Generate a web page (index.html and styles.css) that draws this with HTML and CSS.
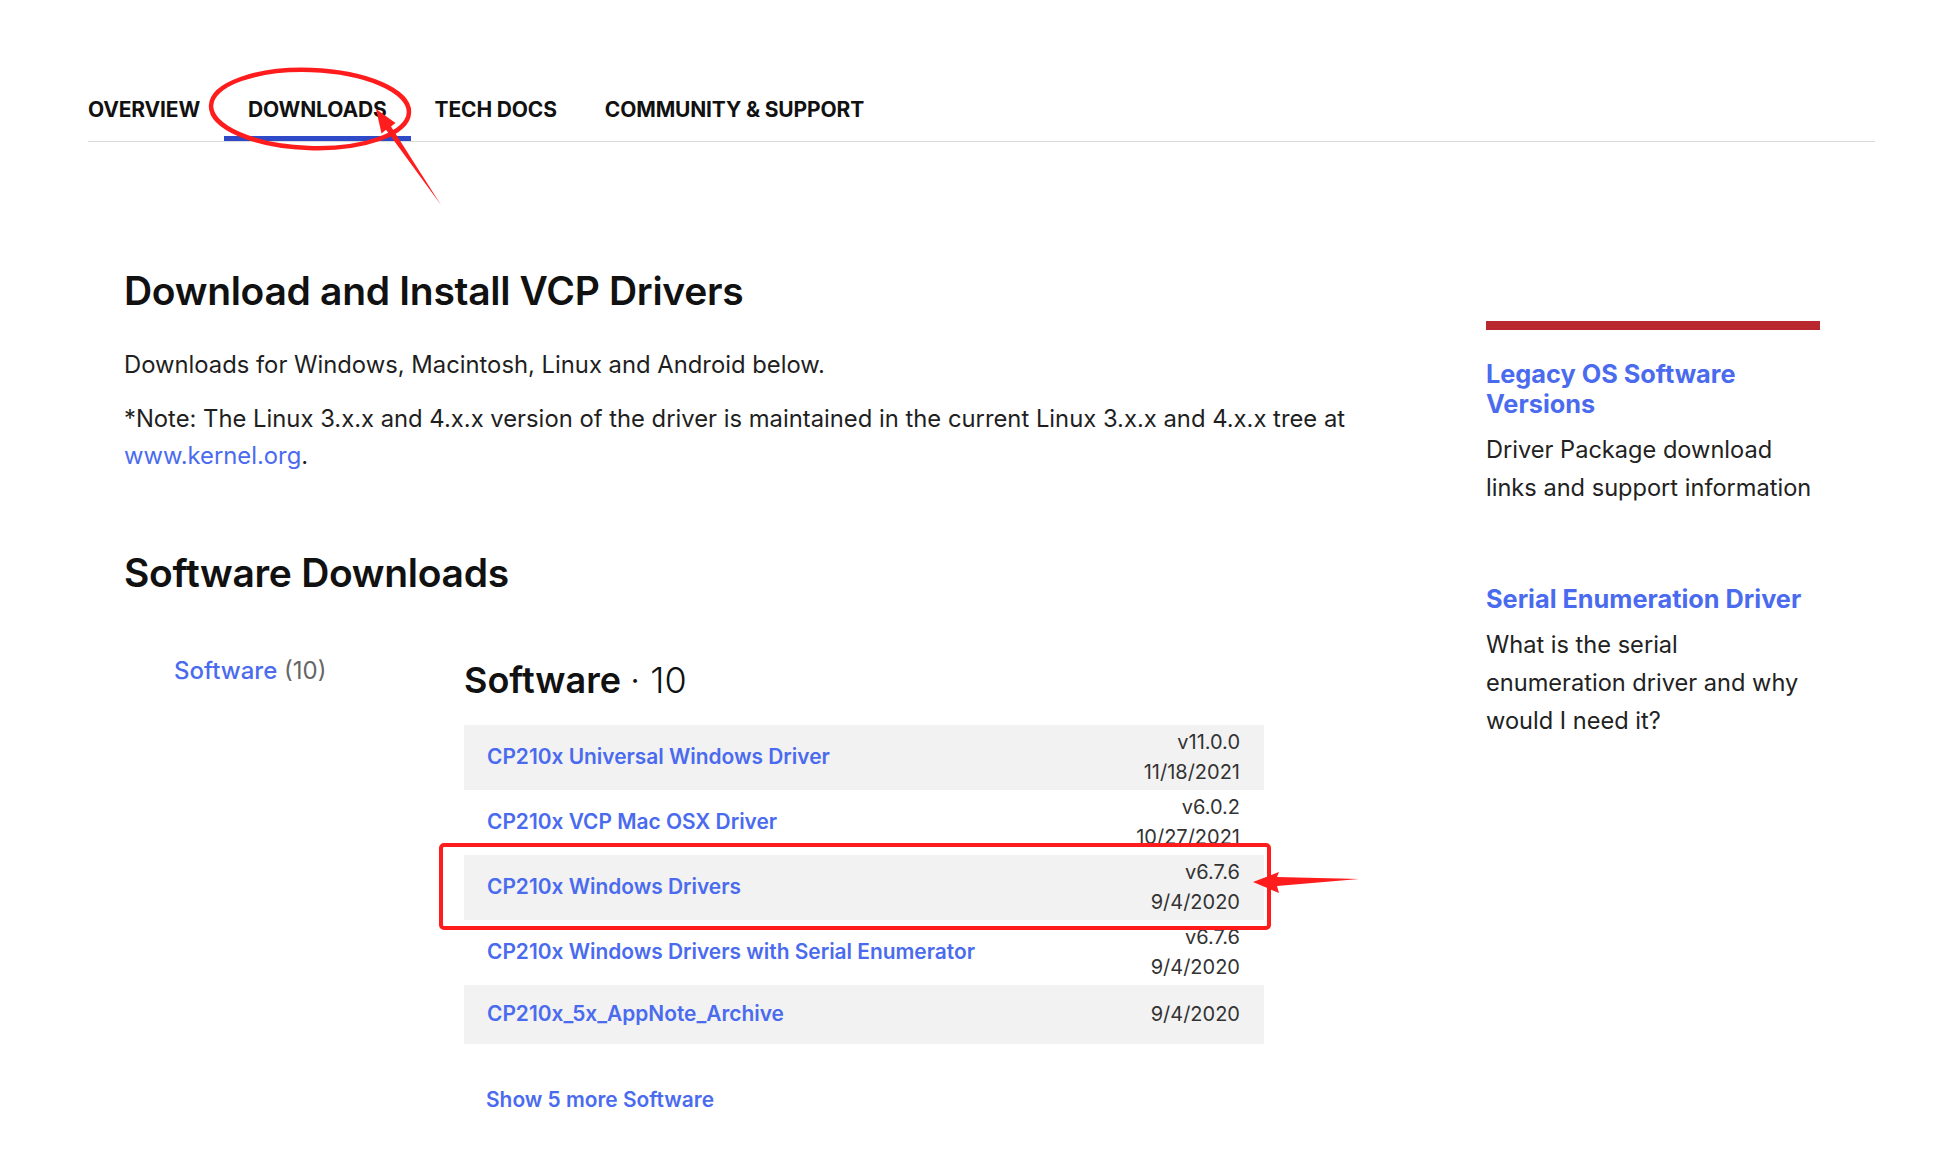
FILE: index.html
```html
<!DOCTYPE html>
<html lang="en">
<head>
<meta charset="utf-8">
<title>CP210x Downloads</title>
<link rel="stylesheet" href="styles.css">
</head>
<body>
<nav class="tabs">
  <a class="tab tab-first">OVERVIEW</a>
  <a class="tab tab-active">DOWNLOADS</a>
  <a class="tab">TECH DOCS</a>
  <a class="tab">COMMUNITY &amp; SUPPORT</a>
</nav>

<div class="layout">
  <main class="main">
    <h1 class="title">Download and Install VCP Drivers</h1>
    <p class="lead">Downloads for Windows, Macintosh, Linux and Android below.</p>
    <p class="note">*Note: The Linux 3.x.x and 4.x.x version of the driver is maintained in the current Linux 3.x.x and 4.x.x tree at <a class="link">www.kernel.org</a>.</p>

    <h2 class="title title-2">Software Downloads</h2>

    <div class="downloads">
      <div class="filters">
        <a class="filter-link">Software</a> <span class="filter-count">(10)</span>
      </div>
      <div class="results">
        <h3 class="results-title">Software <span class="results-count">· 10</span></h3>
        <div class="table">
          <div class="row row-shaded">
            <a class="row-name">CP210x Universal Windows Driver</a>
            <div class="row-meta"><span>v11.0.0</span><span>11/18/2021</span></div>
          </div>
          <div class="row">
            <a class="row-name">CP210x VCP Mac OSX Driver</a>
            <div class="row-meta"><span>v6.0.2</span><span>10/27/2021</span></div>
          </div>
          <div class="row row-shaded">
            <a class="row-name">CP210x Windows Drivers</a>
            <div class="row-meta"><span>v6.7.6</span><span>9/4/2020</span></div>
          </div>
          <div class="row">
            <a class="row-name">CP210x Windows Drivers with Serial Enumerator</a>
            <div class="row-meta"><span>v6.7.6</span><span>9/4/2020</span></div>
          </div>
          <div class="row row-shaded row-single">
            <a class="row-name">CP210x_5x_AppNote_Archive</a>
            <div class="row-meta"><span>9/4/2020</span></div>
          </div>
        </div>
        <a class="show-more">Show 5 more Software</a>
      </div>
    </div>
  </main>

  <aside class="sidebar">
    <div class="sidebar-bar"></div>
    <a class="side-title">Legacy OS Software<br>Versions</a>
    <p class="side-desc">Driver Package download<br>links and support information</p>
    <a class="side-title side-title-2">Serial Enumeration Driver</a>
    <p class="side-desc">What is the serial<br>enumeration driver and why<br>would I need it?</p>
  </aside>
</div>

<svg class="annotations" width="1960" height="1173" viewBox="0 0 1960 1173" aria-hidden="true">
  <ellipse cx="310" cy="109" rx="99" ry="39" transform="rotate(2 310 109)" fill="none" stroke="#ff1c1c" stroke-width="4.5"/>
  <polygon points="441,205 391,126.4 395.5,123 376,109 381.5,133.5 386,129.8" fill="#ff1c1c"/>
  <rect x="441" y="845" width="828" height="83" rx="3" fill="none" stroke="#ff1c1c" stroke-width="4"/>
  <polygon points="1359,879 1277,877 1279,872 1253,882 1279,893 1277,886" fill="#ff1c1c"/>
</svg>
</body>
</html>
```

FILE: styles.css
```css
* { box-sizing: border-box; }

html, body {
  margin: 0;
  padding: 0;
  background: #ffffff;
}

body {
  font-family: Inter, "Noto Sans", "Liberation Sans", sans-serif;
  color: #1b1b1b;
  width: 1960px;
  min-height: 1173px;
  position: relative;
}

a { text-decoration: none; cursor: pointer; }

/* Tabs */
.tabs {
  display: flex;
  margin: 81px 85px 0 88px;
  border-bottom: 1px solid #dadada;
}

.tab {
  display: block;
  font-weight: 700;
  font-size: 21px;
  line-height: 22px;
  color: #111111;
  padding: 18px 24px 15px;
  border-bottom: 5px solid transparent;
  letter-spacing: -0.15px;
}

.tab-first { padding-left: 0; }

.tab-active { border-bottom-color: #2f4ac8; }

/* Layout */
.layout {
  display: flex;
  align-items: flex-start;
  padding-left: 124px;
  margin-top: 127px;
}

.main {
  width: 1300px;
  flex: none;
}

.title {
  margin: 0;
  font-size: 39px;
  line-height: 44px;
  font-weight: 600;
  color: #111111;
  letter-spacing: -0.3px;
}

.title-2 { margin-top: 77px; }

.lead, .note {
  margin: 0;
  font-size: 23.8px;
  line-height: 37px;
  color: #1f1f1f;
}

.lead { margin-top: 33px; }
.note { margin-top: 17px; }

.link { color: #4b6bef; }

/* Downloads */
.downloads {
  display: flex;
  align-items: flex-start;
  margin-top: 63px;
  padding-left: 50px;
}

.filters {
  width: 290px;
  flex: none;
  font-size: 24px;
  line-height: 26px;
}

.filter-link { color: #4b6bef; font-weight: 500; }
.filter-count { color: #666666; }

.results { width: 800px; flex: none; }

.results-title {
  margin: 0;
  font-size: 36px;
  line-height: 44px;
  font-weight: 600;
  color: #111111;
}

.results-count { font-weight: 300; }

.table { margin-top: 23px; }

.row {
  display: flex;
  align-items: center;
  justify-content: space-between;
  min-height: 59px;
  padding: 2px 24px 3px 23px;
}

.row-shaded { background: #f2f2f2; }

.row-name {
  color: #4b6bef;
  font-size: 20.9px;
  font-weight: 600;
  line-height: 26px;
}

.row-meta {
  display: flex;
  flex-direction: column;
  align-items: flex-end;
  font-size: 20px;
  line-height: 30px;
  color: #333333;
}

.show-more {
  display: block;
  margin-top: 43px;
  padding-left: 22px;
  color: #4b6bef;
  font-size: 20.9px;
  font-weight: 600;
  line-height: 26px;
}

/* Sidebar */
.sidebar {
  width: 340px;
  flex: none;
  margin-left: 62px;
  padding-top: 52px;
}

.sidebar-bar {
  width: 334px;
  height: 9px;
  background: #b8282e;
}

.side-title {
  display: block;
  margin-top: 29px;
  color: #4b6bef;
  font-size: 25.3px;
  font-weight: 700;
  line-height: 30px;
}

.side-title-2 { margin-top: 77px; }

.side-desc {
  margin: 12px 0 0;
  font-size: 23.6px;
  line-height: 38px;
  color: #222222;
}

/* Annotation overlay */
.annotations {
  position: absolute;
  left: 0;
  top: 0;
  pointer-events: none;
}
```
